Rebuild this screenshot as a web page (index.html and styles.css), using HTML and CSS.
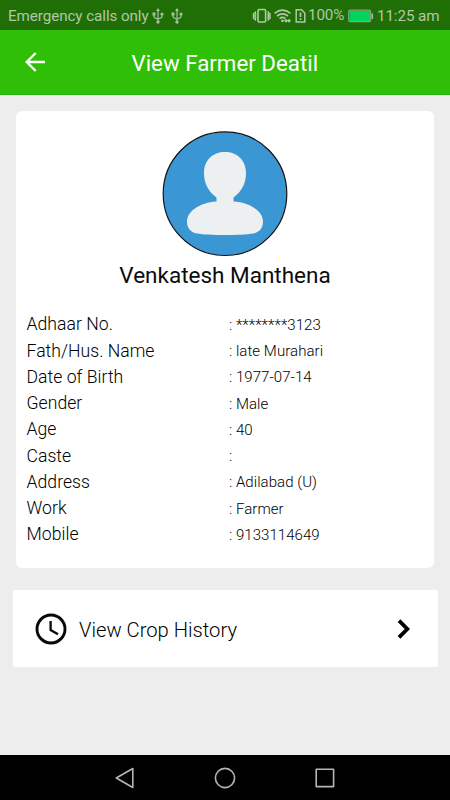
FILE: index.html
```html
<!DOCTYPE html>
<html lang="en">
<head>
<meta charset="utf-8">
<title>View Farmer Deatil</title>
<link rel="stylesheet" href="styles.css">
</head>
<body>
<div class="screen">
  <div class="status">
    <span class="carrier">Emergency calls only</span>
    <svg class="usb" width="12" height="16" viewBox="0 0 12 16"><g fill="none" stroke="currentColor" stroke-width="1.2"><path d="M6 2v12M2 6v2.500q0 1.500 4 2.500M10 5v3.500q0 1.500-4 2.500"/></g><g fill="currentColor"><path d="M6 0l2 3H4zM.5 4.500h3v3h-3z"/><circle cx="10" cy="6" r="1.600"/><circle cx="6" cy="14" r="1.700"/></g></svg>
    <svg class="usb usb-second" width="12" height="16" viewBox="0 0 12 16"><g fill="none" stroke="currentColor" stroke-width="1.2"><path d="M6 2v12M2 6v2.500q0 1.500 4 2.500M10 5v3.500q0 1.500-4 2.500"/></g><g fill="currentColor"><path d="M6 0l2 3H4zM.5 4.500h3v3h-3z"/><circle cx="10" cy="6" r="1.600"/><circle cx="6" cy="14" r="1.700"/></g></svg>
    <svg class="signals" width="56" height="16" viewBox="252 7 56 16" fill="none" stroke="currentColor">
      <rect x="258" y="8.500" width="7.600" height="12.500" rx="1" stroke-width="1.600"/>
      <path stroke-width="1.400" d="M255.800 10.500l-1 1.500 1 1.500-1 1.500 1 1.500-1 1.500 1 1.500M253.500 12v6M267.800 10.500l1 1.500-1 1.500 1 1.500-1 1.500 1 1.500-1 1.500M270 12v6"/>
      <path stroke-width="1.600" d="M274.500 12.300q8-6.500 16 0M277 15q5.500-4.300 11 0M279.500 17.600q3-2.400 6 0"/>
      <circle cx="282.500" cy="19.800" r="1.400" fill="currentColor" stroke="none"/>
      <path stroke-width="1.400" d="M285 19.800h5M286.500 18.300l-1.500 1.500 1.500 1.500M288.500 18.300l1.500 1.500-1.500 1.500"/>
      <path stroke-width="1.500" d="M296.200 8.700h5.300l3.300 3.300v9h-8.600z"/>
      <path stroke-width="1.700" d="M300.500 11.500v4.500M300.500 17.200v1.700"/>
    </svg>
    <span class="percent">100%</span>
    <svg class="battery" width="26" height="14" viewBox="0 0 26 14"><rect x=".7" y="1.200" width="22" height="11.500" rx="1.500" fill="none" stroke="#88a780" stroke-width="1.200"/><rect x="1.500" y="2" width="20.500" height="10" fill="#00d65b"/><path d="M23.500 4.500h1.500v5.500h-1.500z" fill="#a4bd9e"/></svg>
    <span class="time">11:25 am</span>
  </div>
  <header class="bar">
    <svg class="back" width="20" height="20" viewBox="0 0 20 20" fill="none" stroke="#fff" stroke-width="2.400"><path d="M20 10H2M10.700 1L1.700 10l9 9"/></svg>
    <h1 class="title">View Farmer Deatil</h1>
  </header>
  <main class="content">
    <section class="card">
      <svg class="avatar" width="126" height="126" viewBox="162 131 126 126"><circle cx="225" cy="193.700" r="61.800" fill="#3b97d3" stroke="#111" stroke-width="1.200"/><path fill="#ecf0f1" d="M225 152c12 0 21 8 21 21 0 11-5 19-12.500 24.500V201.500c17 1 29.500 10 29.500 20 0 7-4 11-10 12-12 2-44 2-56 0-6-1-10-5-10-12 0-10 12.500-19 29.500-20v-4C209 192 204 184 204 173c0-13 9-21 21-21z"/></svg>
      <h2 class="name">Venkatesh Manthena</h2>
      <dl class="details">
        <dt>Adhaar No.</dt><dd>: ********3123</dd>
        <dt>Fath/Hus. Name</dt><dd>: late Murahari</dd>
        <dt>Date of Birth</dt><dd>: 1977-07-14</dd>
        <dt>Gender</dt><dd>: Male</dd>
        <dt>Age</dt><dd>: 40</dd>
        <dt>Caste</dt><dd>:</dd>
        <dt>Address</dt><dd>: Adilabad (U)</dd>
        <dt>Work</dt><dd>: Farmer</dd>
        <dt>Mobile</dt><dd>: 9133114649</dd>
      </dl>
    </section>
    <section class="history">
      <svg width="32" height="32" viewBox="0 0 32 32" fill="none" stroke="#080808"><circle cx="16" cy="16" r="14" stroke-width="2.900"/><path d="M15.600 8v9l7.400 4.300" stroke-width="2.300"/></svg>
      <span class="history-label">View Crop History</span>
      <svg class="chevron" width="14" height="20" viewBox="0 0 14 20" fill="none" stroke="#000" stroke-width="3.800"><path d="M2 1.700L10.300 10 2 18.300"/></svg>
    </section>
  </main>
  <nav class="nav">
    <svg width="22" height="22" viewBox="0 0 22 22"><path d="M18.800 1.500v19L2.300 11z"/></svg>
    <svg width="22" height="22" viewBox="0 0 22 22"><circle cx="11" cy="11" r="9.600"/></svg>
    <svg width="22" height="22" viewBox="0 0 22 22"><rect x="2.200" y="2.200" width="17.400" height="17.400"/></svg>
  </nav>
</div>
</body>
</html>
```
FILE: styles.css
```css
* { box-sizing: border-box; }
body { margin: 0; font-family: Roboto, "Liberation Sans", sans-serif; color: #000; }
svg { display: block; flex: none; }
h1, h2, dl, dd { margin: 0; font-weight: 400; }
.screen { width: 450px; height: 800px; display: flex; flex-direction: column; background: #ededed; overflow: hidden; white-space: nowrap; }
.status { height: 30px; flex: none; display: flex; align-items: center; padding: 1px 0 0 8px; background: #1f6e06; color: #b0c8a8; font-size: 15.2px; }
.carrier { width: 144px; letter-spacing: -.07px; }
.usb { color: #a6c09f; }
.usb-second { margin-left: 7px; }
.signals { margin-left: 69px; }
.percent { width: 36px; margin-top: -2px; letter-spacing: -.15px; }
.battery { margin-left: 4px; }
.time { margin-left: 3px; letter-spacing: -.1px; }
.bar { height: 65px; flex: none; display: flex; align-items: center; padding-left: 25px; background: #2fbf06; border-bottom: 1px solid #1fb515; color: #fff; }
.title { margin-left: 86.5px; padding-top: 1px; font-size: 22.3px; line-height: 26px; }
.content { flex: 1; padding: 16px 12px 0; }
.card { height: 457px; margin: 0 4px; padding: 20px 10px 0; display: flex; flex-direction: column; align-items: center; background: #fff; border-radius: 6px; }
.name { margin-top: 4px; font-size: 22.5px; line-height: 28px; color: #0c0c0c; }
.details { width: 100%; margin-top: 22.4px; display: grid; grid-template-columns: 202.5px 1fr; grid-auto-rows: 26.25px; line-height: 26px; font-size: 17.6px; font-weight: 300; padding-left: .5px; }
.details dt { letter-spacing: .03px; }
.details dd { font-size: 15px; padding-top: .6px; font-weight: 300; letter-spacing: .06px; }
.history { height: 76.5px; margin: 22.3px .5px 0; padding: 0 27px 0 22.5px; display: flex; align-items: center; background: #fff; border-radius: 2px; }
.history-label { margin-left: 12px; padding-top: 2px; font-size: 20.2px; font-weight: 300; }
.chevron { margin-left: auto; }
.nav { height: 45px; flex: none; display: flex; align-items: center; justify-content: center; gap: 78px; background: #000; }
.nav svg { fill: none; stroke: #b5b5b5; stroke-width: 1.600; stroke-linejoin: round; }
```
